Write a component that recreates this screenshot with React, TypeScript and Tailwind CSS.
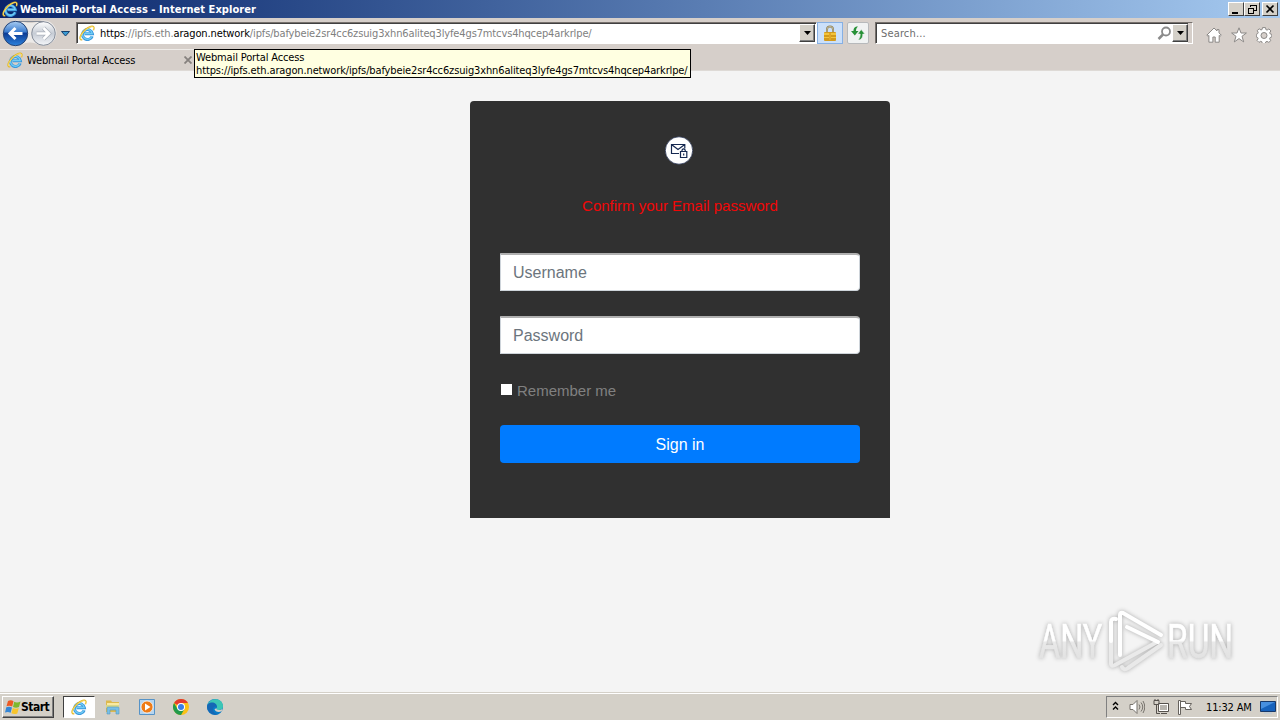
import type { ReactNode } from "react";

const IeIcon = ({ className }: { className: string }) => (
  <svg viewBox="0 0 16 16" className={className} fill="none">
    <path d="M13.200 11.200A5 5 0 1 1 13.400 8.700H5.500" stroke="#3a97dc" strokeWidth="3" />
    <path d="M12.900 11.200A4.900 4.900 0 1 1 13.200 8.500H5.500" stroke="#72cdf5" strokeWidth="1.300" />
    <path d="M14.400 5.200C15.600 2.400 14.600.6 11.800 1.500 8.700 2.500 4.300 6.200 2.200 9.700.5 12.500.6 15.200 3.300 14.600" stroke="#e0b32c" strokeWidth="1.500" />
    <path d="M14.400 4.600C15.200 2.200 14.200 1 11.800 1.800 8.700 2.800 4.500 6.400 2.400 9.900 1 12.400 1 14.400 2.600 14.400" stroke="#fce46a" strokeWidth=".8" />
  </svg>
);

const NavButtons = () => (
  <svg viewBox="0 0 56 28" className="h-7 w-14 shrink-0">
    <defs>
      <linearGradient id="back" x1="0" y1="0" x2="0" y2="1">
        <stop offset="0" stopColor="#a9cdf2" />
        <stop offset=".42" stopColor="#3f7fd0" />
        <stop offset=".5" stopColor="#0c3d96" />
        <stop offset="1" stopColor="#2d83dd" />
      </linearGradient>
      <linearGradient id="forward" x1="0" y1="0" x2="0" y2="1">
        <stop offset="0" stopColor="#ffffff" />
        <stop offset=".5" stopColor="#c6ccd5" />
        <stop offset="1" stopColor="#f4f6f9" />
      </linearGradient>
    </defs>
    <path d="M14 1.500C22 1.500 22 4 29 4s7-2.500 14-2.500a12.500 12.500 0 0 1 0 25c-7 0-7-3-14-3s-7 3-14 3Z" fill="#eceae8" />
    <path d="M14 2.500h29" stroke="#858b96" fill="none" />
    <circle cx="14.500" cy="14.500" r="12.200" fill="url(#back)" stroke="#264475" />
    <circle cx="42.500" cy="14.500" r="11.800" fill="url(#forward)" stroke="#868e9b" />
    <path d="M21.500 14.500H9.500M14.500 9 9 14.500l5.500 5.500" stroke="#fff" strokeWidth="3" fill="none" />
    <path d="M35.500 14.500h12M42.500 9l5.500 5.500-5.500 5.500" stroke="#aab0ba" strokeWidth="4" fill="none" />
    <path d="M35.500 14.500h12M42.500 9l5.500 5.500-5.500 5.500" stroke="#fff" strokeWidth="2.600" fill="none" />
  </svg>
);

const WindowButton = ({ children, className = "" }: { children: ReactNode; className?: string }) => (
  <div className={`flex h-[14px] w-4 items-center justify-center border border-t-white border-r-[#404040] border-b-[#404040] border-l-white bg-[#d4d0c8] ${className}`}>
    {children}
  </div>
);

const DropButton = () => (
  <div className="flex h-[18px] w-4 shrink-0 items-center justify-center border border-t-white border-r-[#404040] border-b-[#404040] border-l-white bg-[#d4d0c8] shadow-[inset_-1px_-1px_0_#808080]">
    <svg viewBox="0 0 7 4" className="h-1 w-[7px]">
      <path d="M0 0h7L3.500 4Z" />
    </svg>
  </div>
);

const TitleBar = () => (
  <div className="flex h-[18px] shrink-0 items-center bg-linear-to-r from-[#0a246a] to-[#a6caf0] pr-[2px] pl-[2px]">
    <IeIcon className="size-4" />
    <span className="ml-[2px] pt-px text-[11px] leading-[14px] font-bold tracking-[0.06px] text-white">Webmail Portal Access - Internet Explorer</span>
    <div className="ml-auto flex">
      <WindowButton>
        <svg viewBox="0 0 12 10" className="h-[10px] w-3"><path d="M2 8h6v2H2Z" /></svg>
      </WindowButton>
      <WindowButton>
        <svg viewBox="0 0 12 10" className="h-[10px] w-3" fill="none" stroke="#000" shapeRendering="crispEdges">
          <path d="M4.500 3V1.500h6v5H8M4 1h7M2.500 4.500h5v5h-5ZM2 4h6" />
        </svg>
      </WindowButton>
      <WindowButton className="ml-[2px]">
        <svg viewBox="0 0 12 10" className="h-[10px] w-3" stroke="#000" strokeWidth="1.700"><path d="m2.500 1.500 7 7m0-7-7 7" /></svg>
      </WindowButton>
    </div>
  </div>
);

const Toolbar = () => (
  <div className="flex h-[30px] shrink-0 items-center pb-px pl-px">
    <NavButtons />
    <svg viewBox="0 0 9 6" className="mt-[2px] ml-1 h-[6px] w-[9px]"><path d="M.5.500h8L4.500 5Z" fill="#3a9bd4" stroke="#17416e" /></svg>
    <div className="ml-[6px] flex h-[22px] w-[741px] items-center border border-t-[#76706c] border-r-white border-b-white border-l-[#76706c] bg-white pr-[1px] pl-[2px] shadow-[inset_1px_1px_0_#404040]">
      <IeIcon className="size-4" />
      <span className="ml-[5px] pt-[3px] text-[11px] tracking-[-0.13px] whitespace-nowrap text-[#808080]">
        <span className="text-black">https</span>://ipfs.eth.<span className="text-black">aragon.network</span>/ipfs/bafybeie2sr4cc6zsuig3xhn6aliteq3lyfe4gs7mtcvs4hqcep4arkrlpe/
      </span>
      <div className="ml-auto"><DropButton /></div>
    </div>
    <div className="flex h-[22px] w-[26px] items-center justify-center border border-[#86b0e4] bg-[#cbe0fa]">
      <svg viewBox="0 0 14 16" className="h-4 w-[14px]">
        <path d="M4 8V4.500a3 3 0 0 1 6 0V8" fill="none" stroke="#8e8158" strokeWidth="2" />
        <path d="M4 8V4.500a3 3 0 0 1 6 0V8" fill="none" stroke="#d5cfb5" strokeWidth=".7" />
        <rect x="1" y="7" width="12" height="9" rx="1" fill="#d39a1c" />
        <path d="M1 8h12v2H1zM1 12h12v1H1z" fill="#f3c43b" />
        <path d="M6 8h2v7H6z" fill="#e0a727" />
      </svg>
    </div>
    <div className="ml-1 flex h-[22px] w-[22px] items-center justify-center rounded-[2px] border border-[#b7b9bb] bg-[#f0f2f2]">
      <svg viewBox="0 0 16 16" className="size-4">
        <path d="M8 1.500C4.500 1.500 3.500 3.500 3.500 6H1l3.800 4.500L8.500 6H6C6 4 6.500 3 8 1.500Z" fill="#279137" />
        <path d="M8 15c3.500 0 4.800-2.500 4.800-6H15l-3.800-4.500L7.700 9h2.500c0 3-.7 4.500-2.200 6Z" fill="#279137" stroke="#f0f2f2" strokeWidth=".6" />
      </svg>
    </div>
    <div className="ml-[6px] flex h-[22px] w-[318px] items-center border border-t-[#76706c] border-r-white border-b-white border-l-[#76706c] bg-white pl-[5px] shadow-[inset_1px_1px_0_#404040]">
      <span className="pt-[3px] text-[11px] tracking-[0.15px] text-[#6d6d6d]">Search...</span>
      <svg viewBox="0 0 16 16" className="ml-auto size-4" fill="none" stroke="#8a8a8a">
        <circle cx="10" cy="6.500" r="4" strokeWidth="1.800" />
        <path d="M7 9.500 2.500 14" strokeWidth="2.500" />
      </svg>
      <DropButton />
      <div className="h-5 w-1 bg-[#d6cfca]" />
    </div>
    <div className="mt-[5px] ml-[13px] flex gap-[9px]">
      <svg viewBox="0 0 16 16" className="size-4" fill="#fff" stroke="#8b8886">
        <path d="M8 1 .8 8.200l1.200 1 .9-.8v6.800h4V10h2.300v5.200h4V8.400l.9.800 1.200-1-2.300-2.300V2.600h-2v1.300Z" />
      </svg>
      <svg viewBox="0 0 16 16" className="size-4" fill="#fff" stroke="#8b8886">
        <path d="m8 .8 2 5.200h5.400L11 9.300l1.700 5.600L8 11.600l-4.700 3.300L5 9.300.6 6H6Z" />
      </svg>
      <svg viewBox="0 0 16 16" className="size-4" fill="#fff" stroke="#8b8886">
        <path d="M6.500.6h3l.4 2 1.200.5 1.800-1.200 2 2-1.200 1.900.5 1.100 1.600.5v2.500l-1.700.7-.5 1.200 1.200 1.800-2 1.800-1.800-1-1.200.5-.5 1.700h-3l-.4-1.800-1.200-.5-1.700 1.100-2-2 1.100-1.700-.5-1.200-1.300-.5V7.300l1.400-.7.5-1.200L1.200 3.600l2-1.800L5 3l1.100-.5Z" />
        <circle cx="8" cy="8.500" r="3" fill="#d6cfca" />
      </svg>
    </div>
  </div>
);

const TabRow = () => (
  <div className="relative flex h-[23px] shrink-0 items-center border-b border-[#dedad6] pl-[7px]">
    <div className="absolute top-px left-0 h-px w-[194px] bg-[#eeebe8]" />
    <IeIcon className="mt-px size-4" />
    <span className="ml-1 pt-[4px] text-[11px] tracking-[-0.14px]">Webmail Portal Access</span>
    <svg viewBox="0 0 8 8" className="absolute top-2 left-[184px] size-2" stroke="#86817e" strokeWidth="1.800"><path d="m.5.500 7 7m0-7-7 7" /></svg>
    <div className="absolute top-px left-[194px] z-10 h-[29px] w-[497px] border border-black bg-[#ffffe1] pl-px text-[11px] leading-[13px] whitespace-nowrap">
      <div className="pt-px tracking-[-0.14px]">Webmail Portal Access</div>
      <div className="tracking-[-0.13px]">https://ipfs.eth.aragon.network/ipfs/bafybeie2sr4cc6zsuig3xhn6aliteq3lyfe4gs7mtcvs4hqcep4arkrlpe/</div>
    </div>
  </div>
);

const inputClass =
  "block h-[38px] w-full rounded-r border border-t-2 border-[#ced4da] border-t-[#b0b0b0] bg-white px-3 text-[16px] text-[#495057] outline-none placeholder:text-[#6c757d]";

const LoginCard = () => (
  <form className="mt-[30px] ml-[470px] h-[417px] w-[420px] rounded-t bg-[#303030] px-[30px] pt-[35px] font-['Liberation_Sans',Arial,sans-serif]">
    <svg viewBox="0 0 30 30" className="mx-auto block size-[30px] -translate-x-px">
      <circle cx="15" cy="14.500" r="13.700" fill="#fff" stroke="#172447" strokeWidth=".7" />
      <g fill="none" stroke="#152850" strokeWidth="1.200">
        <path d="M15 17.500H7.500v-9h13.300v4M7.500 8.500l6.500 5 6.800-5" />
        <path d="M16.500 15.500h6.300v6h-6.300ZM18 15.500V14q1.600-2.300 3.200 0v1.500M19.700 17.500v2" />
      </g>
    </svg>
    <h1 className="mt-[30px] text-center text-[15px] leading-[20px] text-[#f00707]">Confirm your Email password</h1>
    <div className="mt-[37px] flex flex-col gap-[25px]">
      <input className={inputClass} placeholder="Username" />
      <input className={inputClass} type="password" placeholder="Password" />
    </div>
    <label className="mt-[26px] flex h-[22px] items-center text-[15px] text-[#808080]">
      <input type="checkbox" className="mr-[5px] mb-[4px] ml-px size-[11px] appearance-none bg-white" />
      Remember me
    </label>
    <button type="button" className="mt-[23px] h-[38px] w-full rounded bg-[#007bff] pt-px text-[16px] text-white">Sign in</button>
  </form>
);

const Watermark = () => (
  <svg viewBox="0 0 200 68" className="absolute right-[45px] bottom-[17px] h-[68px] w-[200px] drop-shadow-[0_0_2px_#aaa]">
    <defs>
      {/* runs from cap height to baseline, in the text's own coordinates */}
      <linearGradient id="mark" x1="0" y1="-34" x2="0" y2="0" gradientUnits="userSpaceOnUse">
        <stop offset=".48" stopColor="#fff" />
        <stop offset=".54" stopColor="#e9e9e9" />
        <stop offset="1" stopColor="#e2e2e2" />
      </linearGradient>
    </defs>
    <g fill="url(#mark)" stroke="url(#mark)" strokeWidth=".6" fontFamily="Roboto" fontSize="48">
      <text transform="translate(4 51) scale(.72 1)" textLength="88" lengthAdjust="spacingAndGlyphs">ANY</text>
      <text transform="translate(132 51) scale(.72 1)" textLength="92" lengthAdjust="spacingAndGlyphs">RUN</text>
    </g>
    <g fill="none" strokeWidth="4" strokeLinecap="round" strokeLinejoin="round">
      <path d="M87 60q2 4 6 1l33-23" stroke="#e9e9e9" />
      <path d="M76 34v23q0 3 4 1l42-23" stroke="#eaeaea" />
      <path d="M81 12q-5-1-5 3v19M92 20l31 15" stroke="#fff" />
      <path d="M85 48V8q0-3 3-2l38 22" stroke="#fff" />
    </g>
  </svg>
);

const StartFlag = () => (
  <svg viewBox="0 0 16 16" className="size-4">
    <path d="M3 2q3-1.500 5.500.2L7.200 7.500Q4.500 6 1.500 7.200Z" fill="#ed5a24" />
    <path d="M9.200 2.700Q12 4.200 15.500 2.500L14 8q-3 1.400-6 0Z" fill="#7eb82f" />
    <path d="M1.300 8.200Q4.300 7 7 8.500L5.600 13.800Q3 12.200 0 13.500Z" fill="#3486d6" />
    <path d="M7.800 9q3 1.400 6 .1l-1.500 5.300q-3 1.300-5.900-.2Z" fill="#f8c52c" />
  </svg>
);

const Taskbar = () => (
  <div className="flex h-[28px] shrink-0 items-center border-t border-[#d4d0c8] bg-[#d4d0c8] shadow-[inset_0_1px_0_#fff]">
    <div className="ml-[2px] flex h-[22px] w-[52px] items-center border border-t-white border-r-[#404040] border-b-[#404040] border-l-white pl-[2px] shadow-[inset_-1px_-1px_0_#808080]">
      <StartFlag />
      <span className="text-[12px] font-bold tracking-[-0.5px]">Start</span>
    </div>
    <div className="ml-[9px] flex h-[22px] w-8 items-center justify-center border border-t-[#404040] border-r-white border-b-white border-l-[#404040] bg-white">
      <IeIcon className="size-4" />
    </div>
    <div className="ml-[10px] flex items-center gap-[18px]">
      <svg viewBox="0 0 16 16" className="size-4">
        <path d="M1 3V1.500h5L7 3h7v10H1Z" fill="#ddb94e" />
        <path d="M2 4h12v7H2Z" fill="#fae9a0" />
        <path d="M1 6h13v3H1Z" fill="#d8d88a" />
        <path d="M2 15V9q0-1 1-1h10q1 0 1 1v6h-3v-4H5v4Z" fill="#78bfe6" stroke="#5698bf" strokeWidth=".6" />
      </svg>
      <svg viewBox="0 0 16 16" className="size-4">
        <path d="M.5.500h15v15H.5Z" fill="#b6d5ef" stroke="#5693c7" />
        <circle cx="8" cy="8" r="6" fill="#ee7b16" stroke="#fff" strokeWidth=".7" />
        <path d="m6 4.500 5.500 3.500L6 11.500Z" fill="#fff" />
      </svg>
      <svg viewBox="0 0 16 16" className="size-4">
        <circle cx="8" cy="8" r="8" fill="#fbc116" />
        <path d="M8 8 1.070 4A8 8 0 0 1 14.930 4H8Z" fill="#e33b2e" />
        <path d="M1.070 4A8 8 0 0 0 8 16l3.500-6L8 8 4.500 10Z" fill="#229a4c" />
        <circle cx="8" cy="8" r="4" fill="#fff" />
        <circle cx="8" cy="8" r="3" fill="#397ee8" />
      </svg>
      <svg viewBox="0 0 16 16" className="size-4">
        <circle cx="8" cy="8" r="8" fill="#087bc7" />
        <path d="M.5 6C2 1.500 6-.5 10 .3c4 .8 6 4 6 7 0 2.500-2 3.700-4 3.700s-3-.7-2.300-1.700C11 6.500 7.500 3.500.5 6Z" fill="#3cc6b5" />
        <path d="M1 5c4-3 9-1 9 3-2-1.500-4 0-4 2.500C6 13 8 15 11 15.300 5 17-1 12 .2 6.500Z" fill="#1567b5" />
        <path d="M9.700 9.300c-.7 1 .3 1.700 2.300 1.700 1.500 0 2.500-.5 3.500-1.300l-.7 2.300c-2.500 2-6.800 1-7.300-2Z" fill="#d4d0c8" />
      </svg>
    </div>
    <div className="mr-[2px] ml-auto flex h-[22px] w-[172px] items-center border border-t-[#808080] border-r-white border-b-white border-l-[#808080] pl-[5px]">
      <svg viewBox="0 0 7 10" className="mb-[2px] h-[10px] w-[7px]" fill="none" stroke="#000" strokeWidth="1.400"><path d="m1 4 2.500-2.500L6 4M1 8.500 3.500 6 6 8.500" /></svg>
      <svg viewBox="0 0 16 16" className="ml-[10px] size-4" fill="none" stroke="#77736d">
        <path d="M1 5.500h3l4-4v13l-4-4H1Z" fill="#fff" />
        <path d="M10 5.500q2 2.500 0 5M12 3.500q3.500 4.500 0 9M14 2q3.500 6 0 12" />
      </svg>
      <svg viewBox="0 0 16 16" className="ml-[8px] size-4" fill="none" stroke="#55514c">
        <path d="M5.500 4.500h10v8h-10ZM8 14.500h6" fill="#fff" />
        <path d="M7 6h7v5H7Z" fill="#b7b4ae" stroke="none" />
        <path d="M1 1.500h5v4H1ZM3.500 5.500v9H7M2 0v2M5 0v2" />
      </svg>
      <svg viewBox="0 0 16 16" className="ml-[8px] size-4" fill="#fff" stroke="#66625d">
        <path d="M1.500 1.500h2v14h-2ZM3.500 2.500h5v2h6l-2 3 2 3h-6v-2h-5Z" />
      </svg>
      <span className="ml-[13px] pt-[3px] text-[11px] tracking-[-0.15px] whitespace-nowrap">11:32 AM</span>
      <svg viewBox="0 0 16 14" className="mr-px ml-auto h-[14px] w-4">
        <path d="M.5 1.500h15v10H.5Z" fill="#1762bc" stroke="#17386a" />
        <path d="M1 2h14L1 9Z" fill="#478fdf" />
        <path d="M4 13h8" stroke="#b4c8dc" />
      </svg>
    </div>
  </div>
);

export default function App() {
  return (
    <div className="flex h-[720px] w-[1280px] flex-col overflow-hidden bg-[#d6cfca] font-['DejaVu_Sans_Condensed','DejaVu_Sans',sans-serif] text-black">
      <TitleBar />
      <Toolbar />
      <TabRow />
      <main className="relative min-h-0 grow bg-[#f4f4f4]">
        <div className="flow-root">
          <LoginCard />
        </div>
        <Watermark />
      </main>
      <Taskbar />
    </div>
  );
}
